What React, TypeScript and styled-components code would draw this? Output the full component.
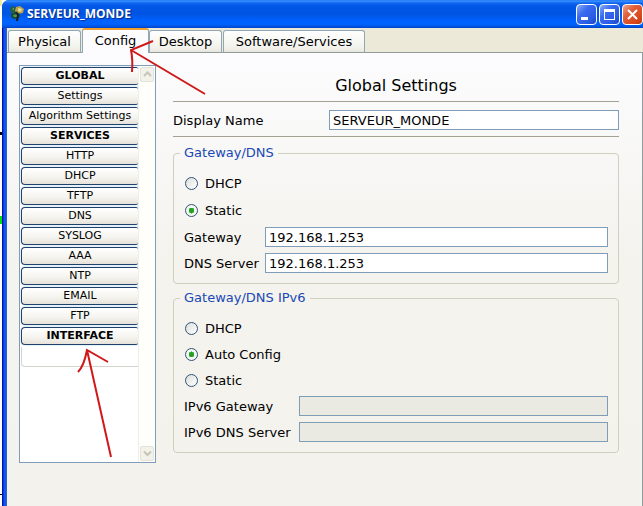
import React, { useState } from "react";
import styled, { createGlobalStyle, css } from "styled-components";

const GlobalStyle = createGlobalStyle`
  *, *::before, *::after { box-sizing: border-box; }
  html, body { margin: 0; padding: 0; }
  body, button, input {
    font-family: "DejaVu Sans", Verdana, sans-serif;
    font-size: 13px;
    color: #000;
  }
`;

const Screen = styled.div`
  position: relative;
  display: flex;
  min-height: 100vh;
  overflow: hidden;
`;

const DesktopEdge = styled.div`
  flex: 0 0 2px;
  background: linear-gradient(
    #f3e9a0 0 6px, #fdfdfd 6px 132px, #000 132px 135px, #fdfdfd 135px 216px,
    #00e010 216px 224px, #fdfdfd 224px 494px, #000 494px 495px, #fdfdfd 495px
  );
`;

const Window = styled.div`
  flex: 1;
  min-width: 0;
  display: flex;
  flex-direction: column;
  border-top-left-radius: 7px;
  padding-left: 5px;
  background: linear-gradient(90deg, #0013a8 0 1px, #0a3be0 1px 2px, #1155ee 2px 4px, #2a62c8 4px 5px);
`;

const TitleBar = styled.header`
  display: flex;
  align-items: center;
  height: 28px;
  margin-left: -5px;
  padding-left: 7px;
  border-top-left-radius: 7px;
  background: linear-gradient(
    #1a6ef0 0, #3a93ff 1px, #1167f2 3px, #0257e6 6px, #0054e3 14px, #0060fb 20px, #0063ff 24px, #0050dc 27px, #003dc0 28px
  );
`;

const Title = styled.h1`
  flex: 1;
  margin: 0 0 0 2px;
  font: bold 12px/20px "Open Sans", "Trebuchet MS", sans-serif;
  color: #fff;
  text-shadow: 1px 1px 1px #0a2a8c;
`;

const WindowButtons = styled.div`
  display: flex;
  gap: 2px;
`;

const WindowButton = styled.button<{ $danger?: boolean }>`
  width: 21px;
  height: 21px;
  padding: 0;
  border: 1px solid #fff;
  border-radius: 4px;
  background: ${(p) =>
    p.$danger
      ? "linear-gradient(135deg, #f0a58c, #e0603a 35%, #d8481c 75%, #b83a12)"
      : "linear-gradient(135deg, #8caef8, #3a6cf0 35%, #2a5be4 75%, #1c45c0)"};

  svg { display: block; }
`;

const TabBar = styled.div`
  display: flex;
  align-items: flex-end;
  height: 25px;
  padding-left: 1px;
  background: #ece9d8;
  box-shadow: inset 0 -1px #919b9c;
`;

const Tab = styled.button<{ $width: number }>`
  width: ${(p) => p.$width}px;
  height: 23px;
  padding: 0;
  border: 1px solid #91a7b4;
  border-bottom-color: #919b9c;
  border-radius: 3px 3px 0 0;
  background: linear-gradient(#fff, #f2f2ec 80%, #e6e5dd);
  line-height: 20px;
  white-space: nowrap;

  & + & { margin-left: 1px; }

  &[aria-selected="true"] {
    height: 25px;
    margin: 0 -1px 0 0;
    padding-bottom: 2px;
    border-top: 2px solid #f0a030;
    border-bottom: 0;
    background: #fcfcfe;
  }
`;

const Pane = styled.div`
  flex: 1;
  display: flex;
  gap: 17px;
  padding: 12px 23px 43px 12px;
  border-right: 1px solid #919b9c;
  background: linear-gradient(#fcfcfe, #f4f3ee 45%, #f3f2ed);
`;

const Sidebar = styled.nav`
  flex: 0 0 137px;
  display: flex;
  border: 1px solid #7f9db9;
  background: #fff;
`;

const NavList = styled.div`
  flex: 1;
  display: flex;
  flex-direction: column;
  gap: 2px;
  padding: 1px 0 0 1px;
`;

const NavItem = styled.button<{ $heading?: boolean }>`
  height: 18px;
  padding: 0;
  border: 1px solid #1f416b;
  border-right-width: 0;
  border-radius: 4px 2px 2px 4px;
  background: linear-gradient(#fff, #f4f3ee 60%, #e6e2da);
  box-shadow: 0 0 0 1px #e4f1f8;
  font-size: 11px;
  line-height: 16px;
  white-space: nowrap;
  ${(p) => p.$heading && css`font-weight: bold;`}
`;

const NavFooter = styled.div`
  height: 20px;
  border: 1px solid #d4d3cd;
  border-width: 0 0 1px 1px;
  border-bottom-left-radius: 4px;
`;

const ScrollBar = styled.div`
  flex: 0 0 17px;
  display: flex;
  flex-direction: column;
  justify-content: space-between;
  padding: 1px;
  border-left: 1px solid #efeee8;
  background: #fefefa;
`;

const ScrollButton = styled.button`
  height: 15px;
  padding: 0;
  border: 1px solid #e4e3d8;
  border-radius: 2px;
  background: #f2f1ea;

  svg { display: block; margin: auto; }
`;

const Main = styled.main`
  flex: 1;
  min-width: 0;
  padding-top: 8px;
`;

const Heading = styled.h2`
  height: 29px;
  margin: 0;
  border-bottom: 1px solid #a5a294;
  font-size: 16px;
  font-weight: normal;
  line-height: 26px;
  text-align: center;
`;

const NameRow = styled.div`
  display: flex;
  margin-bottom: 6px;
  padding: 8px 0 6px;
  border-bottom: 1px solid #a5a294;
`;

const Label = styled.label<{ $width: number }>`
  flex: 0 0 ${(p) => p.$width}px;
  height: 20px;
  line-height: 22px;
  white-space: nowrap;
`;

const TextInput = styled.input`
  flex: 1;
  min-width: 0;
  height: 20px;
  padding: 0 3px;
  border: 1px solid #7f9db9;
  border-radius: 0;
  outline: 0;
  background: #fff;

  &:disabled { background: #ebeae2; }
`;

const Group = styled.fieldset`
  margin: 0 0 4px;
  padding: 10px;
  border: 1px solid #d0d0bf;
  border-radius: 4px;
`;

const Legend = styled.legend`
  margin-left: -4px;
  padding: 0 4px;
  color: #1a48b4;
  line-height: 20px;
`;

const Rows = styled.div`
  display: flex;
  flex-direction: column;
  gap: 6px;
`;

const FieldRow = styled.div`
  display: flex;
`;

const RadioLabel = styled.label<{ $tall?: boolean }>`
  display: flex;
  align-items: center;
  gap: 7px;
  height: ${(p) => (p.$tall ? 21 : 20)}px;
  padding-left: 1px;
`;

const Radio = styled.input`
  appearance: none;
  width: 13px;
  height: 13px;
  margin: 0;
  border: 1px solid #2f5377;
  border-radius: 50%;
  background: linear-gradient(135deg, #dcdfdc, #fff);

  &:checked {
    background: radial-gradient(circle, #24a020 0 2px, #7acb70 3px, #f4f8f2 3px);
  }
`;

const Annotations = styled.svg`
  position: absolute;
  top: 0;
  left: 0;
  pointer-events: none;
`;

const tabs = [
  { name: "Physical", width: 73 },
  { name: "Config", width: 67 },
  { name: "Desktop", width: 73 },
  { name: "Software/Services", width: 142 },
];

const navItems = [
  { name: "GLOBAL", heading: true },
  { name: "Settings" },
  { name: "Algorithm Settings" },
  { name: "SERVICES", heading: true },
  { name: "HTTP" },
  { name: "DHCP" },
  { name: "TFTP" },
  { name: "DNS" },
  { name: "SYSLOG" },
  { name: "AAA" },
  { name: "NTP" },
  { name: "EMAIL" },
  { name: "FTP" },
  { name: "INTERFACE", heading: true },
];

function AppIcon() {
  return (
    <svg width="16" height="18" viewBox="0 0 16 18" aria-hidden="true">
      <path d="M1 3 4 1 7 3 6 8 2 8Z" fill="#27613c" />
      <path d="M7 2 11 1 15 4 14 8 9 9 6 6Z" fill="#b9a04a" />
      <path d="M9 3 13 4 12 7 9 6Z" fill="#e8dc98" />
      <path d="M2 9 7 7 11 9 10 13 5 14 2 12Z" fill="#1c4a34" />
      <path d="M4 10 8 9 8 12 5 12Z" fill="#4f9a4a" />
      <path d="M3 4 5 3 5 5Z" fill="#6fa870" />
      <path d="M7 7 9 10 8 16" fill="none" stroke="#14202a" strokeWidth="2" />
    </svg>
  );
}

function Chevron({ down }: { down?: boolean }) {
  return (
    <svg width="9" height="7" viewBox="0 0 9 7" aria-hidden="true">
      <path d={down ? "M1 1.5 4.5 5 8 1.5" : "M1 5 4.5 1.5 8 5"} fill="none" stroke="#c5c5b8" strokeWidth="2" />
    </svg>
  );
}

function RadioOption(props: { group: string; label: string; value: string; onPick: (v: string) => void; tall?: boolean }) {
  return (
    <RadioLabel $tall={props.tall}>
      <Radio
        type="radio"
        name={props.group}
        checked={props.value === props.label}
        onChange={() => props.onPick(props.label)}
      />
      {props.label}
    </RadioLabel>
  );
}

export default function App() {
  const [tab, setTab] = useState("Config");
  const [mode, setMode] = useState("Static");
  const [mode6, setMode6] = useState("Auto Config");

  return (
    <Screen>
      <GlobalStyle />
      <DesktopEdge />
      <Window>
        <TitleBar>
          <AppIcon />
          <Title>SERVEUR_MONDE</Title>
          <WindowButtons>
            <WindowButton aria-label="Minimize">
              <svg width="19" height="19"><rect x="4" y="12" width="7" height="3" fill="#fff" /></svg>
            </WindowButton>
            <WindowButton aria-label="Maximize">
              <svg width="19" height="19">
                <path d="M4 4H15V15H4ZM5 7V14H14V7Z" fill="#fff" fillRule="evenodd" />
              </svg>
            </WindowButton>
            <WindowButton aria-label="Close" $danger>
              <svg width="19" height="19"><path d="M5 5 14 14M14 5 5 14" stroke="#fff" strokeWidth="2" /></svg>
            </WindowButton>
          </WindowButtons>
        </TitleBar>
        <TabBar role="tablist">
          {tabs.map((t) => (
            <Tab key={t.name} role="tab" $width={t.width} aria-selected={tab === t.name} onClick={() => setTab(t.name)}>
              {t.name}
            </Tab>
          ))}
        </TabBar>
        <Pane>
          <Sidebar>
            <NavList>
              {navItems.map((n) => (
                <NavItem key={n.name} $heading={n.heading}>{n.name}</NavItem>
              ))}
              <NavFooter />
            </NavList>
            <ScrollBar>
              <ScrollButton aria-label="Scroll up"><Chevron /></ScrollButton>
              <ScrollButton aria-label="Scroll down"><Chevron down /></ScrollButton>
            </ScrollBar>
          </Sidebar>
          <Main>
            <Heading>Global Settings</Heading>
            <NameRow>
              <Label htmlFor="display-name" $width={156}>Display Name</Label>
              <TextInput id="display-name" defaultValue="SERVEUR_MONDE" />
            </NameRow>
            <Group>
              <Legend>Gateway/DNS</Legend>
              <Rows>
                <RadioOption group="ipv4" label="DHCP" value={mode} onPick={setMode} tall />
                <RadioOption group="ipv4" label="Static" value={mode} onPick={setMode} tall />
                <FieldRow>
                  <Label htmlFor="gateway" $width={81}>Gateway</Label>
                  <TextInput id="gateway" defaultValue="192.168.1.253" />
                </FieldRow>
                <FieldRow>
                  <Label htmlFor="dns" $width={81}>DNS Server</Label>
                  <TextInput id="dns" defaultValue="192.168.1.253" />
                </FieldRow>
              </Rows>
            </Group>
            <Group>
              <Legend>Gateway/DNS IPv6</Legend>
              <Rows>
                <RadioOption group="ipv6" label="DHCP" value={mode6} onPick={setMode6} />
                <RadioOption group="ipv6" label="Auto Config" value={mode6} onPick={setMode6} />
                <RadioOption group="ipv6" label="Static" value={mode6} onPick={setMode6} />
                <FieldRow>
                  <Label htmlFor="gateway6" $width={115}>IPv6 Gateway</Label>
                  <TextInput id="gateway6" disabled />
                </FieldRow>
                <FieldRow>
                  <Label htmlFor="dns6" $width={115}>IPv6 DNS Server</Label>
                  <TextInput id="dns6" disabled />
                </FieldRow>
              </Rows>
            </Group>
          </Main>
        </Pane>
      </Window>
      <Annotations width="240" height="480" fill="none" stroke="#d01818" strokeWidth="2" aria-hidden="true">
        <path d="M205 94 131 50M153 41 131 50Q133 60 132 72" />
        <path d="M111 457 87 350M108 362 87 350Q84 366 78 372" />
      </Annotations>
    </Screen>
  );
}
